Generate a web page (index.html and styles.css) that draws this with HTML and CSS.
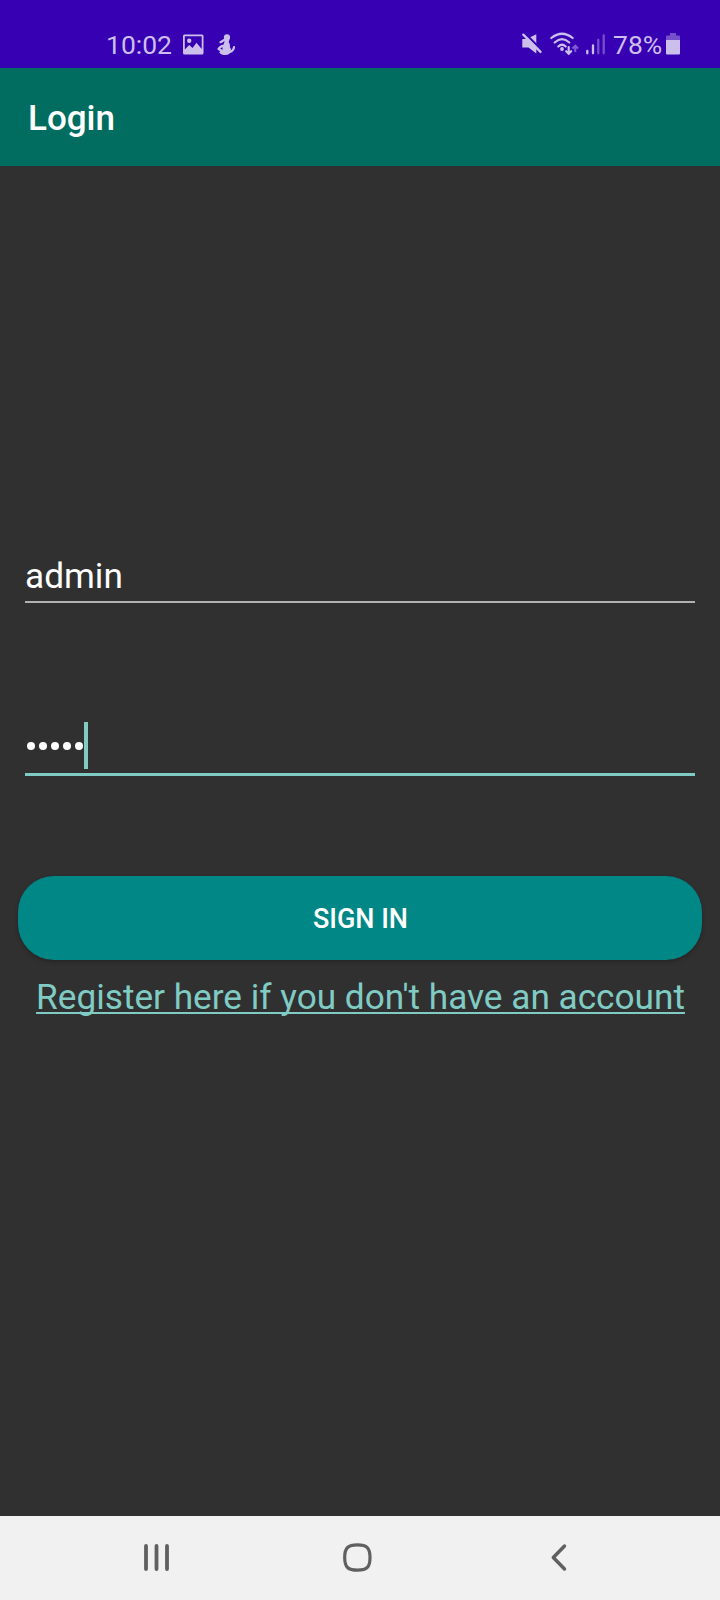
FILE: index.html
```html
<!DOCTYPE html>
<html lang="en">
<head>
<meta charset="utf-8">
<title>Login</title>
<link rel="stylesheet" href="styles.css">
</head>
<body>
<div class="screen">
  <div class="status">
    <span class="clock">10:02</span>
    <svg class="ic-image" width="22" height="22" viewBox="0 0 22 22"><path fill-rule="evenodd" d="M1.500.5h17.500a1.500 1.500 0 0 1 1.500 1.500v17a1.500 1.500 0 0 1-1.500 1.500H1.500A1.500 1.500 0 0 1 0 19V2A1.500 1.500 0 0 1 1.500.5zM1.800 2.300v13.200l4.400-4.500 3.300 3 4-5.200 5.200 6.200V2.300z"/><circle cx="6.200" cy="6.700" r="2.200"/></svg>
    <svg class="ic-figure" width="20" height="22" viewBox="0 0 20 22"><circle cx="11" cy="3.400" r="3.100"/><path class="limb" d="M9 5.500L4.500 8.200"/><path d="M8.500 5.500h4.700c.2 1.400-.5 1.800-.5 2.700 1.100 1.300 1.500 3.200 1.200 5 1 .9 1.200 2 .9 3.300-.5 3-2.300 4.600-5.300 4.600-2.700 0-5-.8-6-2.300-.4-.8.2-1.400 1.400-1.100L1.500 15.500c-.8-.8 1-2.300 2.800-3.800 1-.8 2-1.200 3-.8.7-2 1.700-3.500 1.200-5.400z"/><path class="limb" d="M18 13.200c-.2 2.300-1.700 4-4.500 5"/><path class="cut" d="M4.200 14.700l2.200-1.700.2 2.700z"/></svg>
    <svg class="ic-mute" width="20" height="22" viewBox="0 0 20 22"><path d="M.3 5h4.200L14.300.2v19.300L6.500 13.500H.3z"/><path class="gap" d="M1.500-2l19 19"/><path class="line" d="M1.300.7l17.200 17.200"/></svg>
    <svg class="ic-wifi" width="29" height="22" viewBox="0 0 29 22"><g class="arcs"><path d="M1.300 4Q12 -4.500 22.700 4"/><path d="M4.700 8.500Q12 1.800 19.300 8.500"/><path d="M8.300 12.500Q12 9 15.700 12.500"/></g><circle cx="12" cy="15" r="1.900"/><path class="down" d="M18.700 13v6.500M16.200 17.200l2.500 2.500 2.500-2.500"/><path class="up" d="M25.300 18v-6M22.500 14.500l2.800-2.800 2.800 2.800"/></svg>
    <svg class="ic-signal" width="20" height="22" viewBox="0 0 20 22"><path d="M1.300 16.800v2.500M7 11.500v7.800"/><path class="dim" d="M12.300 6v13.300M17.700 1.300v18"/></svg>
    <span class="percent">78%</span>
    <svg class="ic-battery" width="14" height="22" viewBox="0 0 14 22"><path class="dim" d="M4-1h6v2.500h3a1 1 0 0 1 1 1V6H0V2.500a1 1 0 0 1 1-1h3z"/><path d="M0 6h14v13.500a1 1 0 0 1-1 1H1a1 1 0 0 1-1-1z"/></svg>
  </div>
  <header class="appbar"><h1 class="title">Login</h1></header>
  <main class="form">
    <div class="field user"><span>admin</span></div>
    <div class="field pass">
      <div class="dots"><i></i><i></i><i></i><i></i><i></i></div>
      <div class="caret"></div>
    </div>
    <button class="signin">SIGN IN</button>
    <a class="register"><span>Register here if you don't have an account</span></a>
  </main>
  <nav class="navbar">
    <svg class="recents" width="26" height="30" viewBox="0 0 26 30"><path d="M2 3v23M12.500 3v23M23 3v23"/></svg>
    <svg class="home" width="30" height="30" viewBox="0 0 30 30"><path d="M14.500 1.800C24 1.800 27 4.800 27 14.500S24 27.200 14.500 27.200 1.700 24.200 1.700 14.500 5 1.800 14.500 1.800z"/></svg>
    <svg class="back" width="18" height="30" viewBox="0 0 18 30"><path d="M14.500 3L3.300 14.500 14.500 26"/></svg>
  </nav>
</div>
</body>
</html>
```
FILE: styles.css
```css
body {
  margin: 0;
  font-family: Roboto, "Liberation Sans", sans-serif;
}
.screen {
  display: flex;
  flex-direction: column;
  width: 720px;
  height: 1600px;
  background: #303030;
}
.status {
  display: flex;
  align-items: flex-start;
  height: 34px;
  padding: 34px 40px 0 106px;
  background: #3700b3;
  color: #cdbfec;
  font-size: 26.500px;
  line-height: 21px;
}
.status svg {
  flex: none;
  overflow: visible;
  fill: #cdbfec;
  stroke: none;
}
.clock { width: 77px; }
.ic-figure { margin-left: 11px; }
.ic-figure .cut { fill: #3700b3; }
.ic-figure .limb { fill: none; stroke: #cdbfec; stroke-width: 2.200; stroke-linecap: round; }
.ic-mute { margin-left: auto; }
.ic-mute .gap { stroke: #3700b3; stroke-width: 2.400; }
.ic-mute .line { stroke: #cdbfec; stroke-width: 2.400; stroke-linecap: round; }
.ic-wifi { margin-left: 8px; }
.ic-wifi .arcs, .ic-wifi .down { fill: none; stroke: #cdbfec; stroke-width: 2.200; stroke-linecap: round; }
.ic-wifi .up { fill: none; stroke: #7f5bce; stroke-width: 2; }
.ic-signal { margin-left: 7px; }
.ic-signal path { stroke: #cdbfec; stroke-width: 2.300; stroke-linecap: round; }
.ic-signal .dim { stroke: #7650ca; }
.percent { width: 53px; margin-left: 7px; }
.status .ic-battery .dim { fill: #7650ca; }
.appbar {
  display: flex;
  align-items: center;
  height: 98px;
  padding-left: 28px;
  background: #016d61;
}
.title {
  margin: 3px 0 0;
  color: #fff;
  font-size: 35px;
  font-weight: 500;
}
.form {
  display: flex;
  flex: 1;
  flex-direction: column;
  padding: 386px 18px 0;
}
.field {
  display: flex;
  margin: 0 7px;
  color: #fff;
  font-size: 35.200px;
}
.user {
  height: 49px;
  line-height: 48px;
  border-bottom: 2px solid #b1b1b1;
}
.pass {
  align-items: flex-start;
  height: 50px;
  margin-top: 119px;
  padding-top: 1px;
  border-bottom: 3px solid #80cbc4;
}
.dots {
  display: flex;
  gap: 4px;
  padding: 19px 0 0 2px;
}
.dots i {
  width: 8px;
  height: 8px;
  border-radius: 50%;
  background: #fff;
}
.caret {
  width: 4px;
  height: 47px;
  margin-left: 1px;
  margin-top: -1px;
  background: #80cbc4;
}
.signin {
  height: 84px;
  margin-top: 100px;
  padding: 2px 0 0 1px;
  border: 0;
  border-radius: 36px;
  background: #018786;
  box-shadow: 0 2px 4px rgba(0, 0, 0, .25);
  color: #fff;
  font: 500 27px Roboto, sans-serif;
}
.register {
  display: flex;
  justify-content: center;
  margin-top: 16px;
  padding-left: 1px;
  color: #80cbc4;
  font-size: 35.200px;
  line-height: 42px;
  white-space: nowrap;
}
.register span {
  text-decoration: underline;
  text-decoration-skip-ink: none;
  text-decoration-thickness: 2px;
  text-underline-offset: 3px;
}
.navbar {
  display: flex;
  height: 57px;
  padding: 27px 0 0 144px;
  background: #f1f1f1;
}
.navbar svg {
  fill: none;
  stroke: #606060;
  stroke-width: 3.800;
  stroke-linecap: round;
  stroke-linejoin: round;
}
.navbar .home { margin-left: 173px; stroke-width: 3.200; }
.navbar .back { margin-left: 177px; stroke-width: 3.500; }
```
